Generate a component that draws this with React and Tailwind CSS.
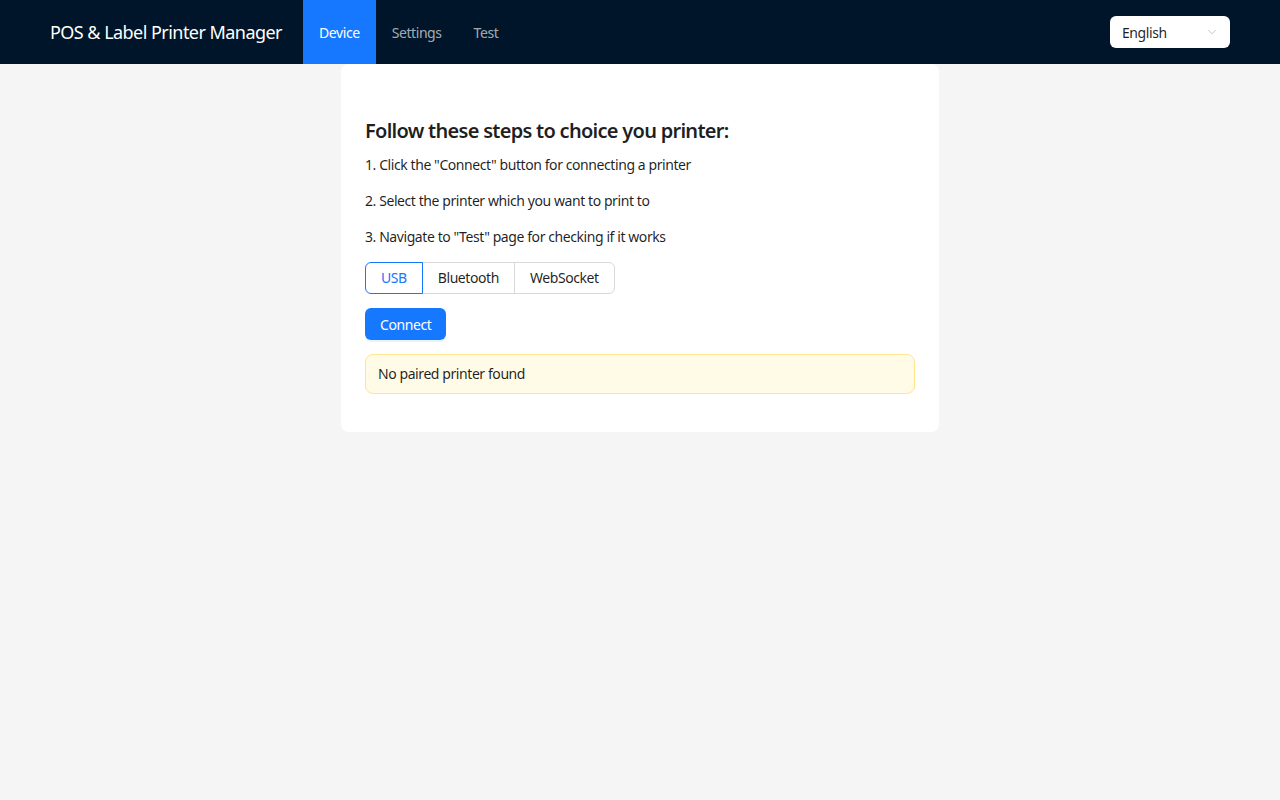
import React, { useState } from "react";
import { ChevronDown } from "lucide-react";

const NAV = ["Device", "Settings", "Test"];
const MODES = ["USB", "Bluetooth", "WebSocket"];

export default function App() {
  const [tab, setTab] = useState("Device");
  const [mode, setMode] = useState("USB");

  return (
    <div
      className="min-h-screen bg-[#f5f5f5] text-[14px] text-[rgba(0,0,0,0.88)] tracking-[-0.03em]"
      style={{ fontFamily: '"Noto Sans", "Open Sans", sans-serif' }}
    >
      {/* HEADER */}
      <header className="h-16 bg-[#001529] flex items-center pl-[50px] pr-[50px]">
        <div className="text-white text-[18px] mr-[21px] leading-none tracking-[-0.03em]">POS &amp; Label Printer Manager</div>
        <nav className="flex h-full">
          {NAV.map((n) => (
            <button
              key={n}
              onClick={() => setTab(n)}
              className={`h-full px-4 text-[14px] tracking-[-0.03em] ${
                tab === n ? "bg-[#1677ff] text-white" : "text-[rgba(255,255,255,0.65)]"
              }`}
            >
              {n}
            </button>
          ))}
        </nav>
        <div className="ml-auto w-[120px] h-8 bg-white rounded-md flex items-center pl-3 pr-[11px]">
          <span className="flex-1 text-[14px]">English</span>
          <ChevronDown size={14} strokeWidth={1.5} className="text-[rgba(0,0,0,0.25)]" />
        </div>
      </header>

      {/* CARD */}
      <main className="w-[598px] mx-auto bg-white rounded-lg px-6 pt-6 pb-6">
        <h4 className="mt-[29px] mb-[9px] text-[20px] leading-[28px] font-semibold tracking-[-0.036em]">
          Follow these steps to choice you printer:
        </h4>
        <p className="leading-[22px] mb-[14px]">1. Click the "Connect" button for connecting a printer</p>
        <p className="leading-[22px] mb-[14px]">2. Select the printer which you want to print to</p>
        <p className="leading-[22px] mb-[14px]">3. Navigate to "Test" page for checking if it works</p>

        <div className="flex mb-[14px]">
          {MODES.map((m, i) => (
            <button
              key={m}
              onClick={() => setMode(m)}
              className={`h-8 px-[15px] border leading-[30px] tracking-[-0.03em] ${
                i === 0 ? "rounded-l-md" : "-ml-px"
              } ${i === MODES.length - 1 ? "rounded-r-md" : ""} ${
                mode === m
                  ? "border-[#1677ff] text-[#1677ff] relative z-10"
                  : "border-[#d9d9d9]"
              }`}
            >
              {m}
            </button>
          ))}
        </div>

        <button className="h-8 px-[15px] rounded-md bg-[#1677ff] text-white mb-[14px] tracking-[-0.03em] shadow-[0_2px_0_rgba(5,145,255,0.1)]">
          Connect
        </button>

        <div className="border border-[#ffe58f] bg-[#fffbe6] rounded-lg px-3 py-2 leading-[22px] mb-[14px]">
          No paired printer found
        </div>
      </main>
    </div>
  );
}
